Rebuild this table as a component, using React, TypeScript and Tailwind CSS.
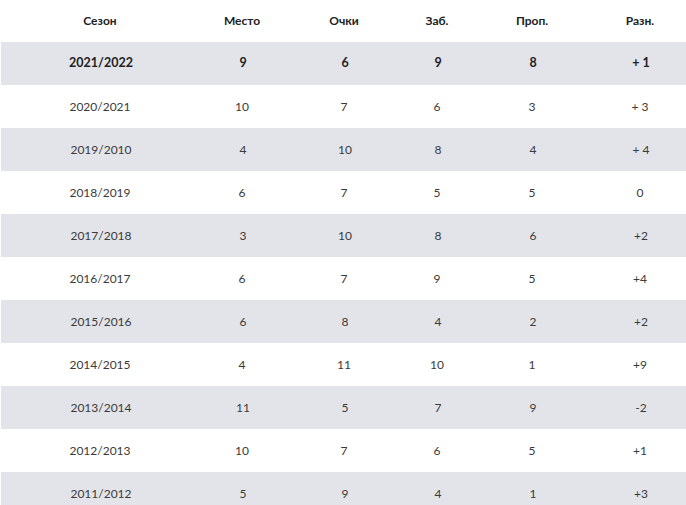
const rows = [
    ['2021/2022', '9', '6', '9', '8', '+ 1'],
    ['2020/2021', '10', '7', '6', '3', '+ 3'],
    ['2019/2010', '4', '10', '8', '4', '+ 4'],
    ['2018/2019', '6', '7', '5', '5', '0'],
    ['2017/2018', '3', '10', '8', '6', '+2'],
    ['2016/2017', '6', '7', '9', '5', '+4'],
    ['2015/2016', '6', '8', '4', '2', '+2'],
    ['2014/2015', '4', '11', '10', '1', '+9'],
    ['2013/2014', '11', '5', '7', '9', '-2'],
    ['2012/2013', '10', '7', '6', '5', '+1'],
    ['2011/2012', '5', '9', '4', '1', '+3'],
];

const headers = ['Сезон', 'Место', 'Очки', 'Заб.', 'Проп.', 'Разн.'];

const cols = 'grid grid-cols-[200px_84px_120px_66px_124px_92px]';

export default function App() {
    return (
        <div className="w-[686px] h-[505px] overflow-hidden bg-white text-[#3a3a3a] font-['Lato','Open_Sans',sans-serif]">
            <div className={`${cols} h-[42px] items-center text-[12px] font-bold text-[#222]`}>
                {headers.map((h) => (
                    <div key={h} className="text-center">{h}</div>
                ))}
            </div>
            {rows.map((r, i) => (
                <div
                    key={r[0]}
                    className={`${cols} h-[43px] items-center ${i % 2 === 0 ? 'bg-[#e3e4e9] ml-px' : 'bg-white'} ${i === 0 ? 'font-bold text-[#222] text-[12.5px]' : 'text-[12px]'}`}
                >
                    {r.map((c, j) => (
                        <div key={j} className="text-center">{c}</div>
                    ))}
                </div>
            ))}
        </div>
    );
}
